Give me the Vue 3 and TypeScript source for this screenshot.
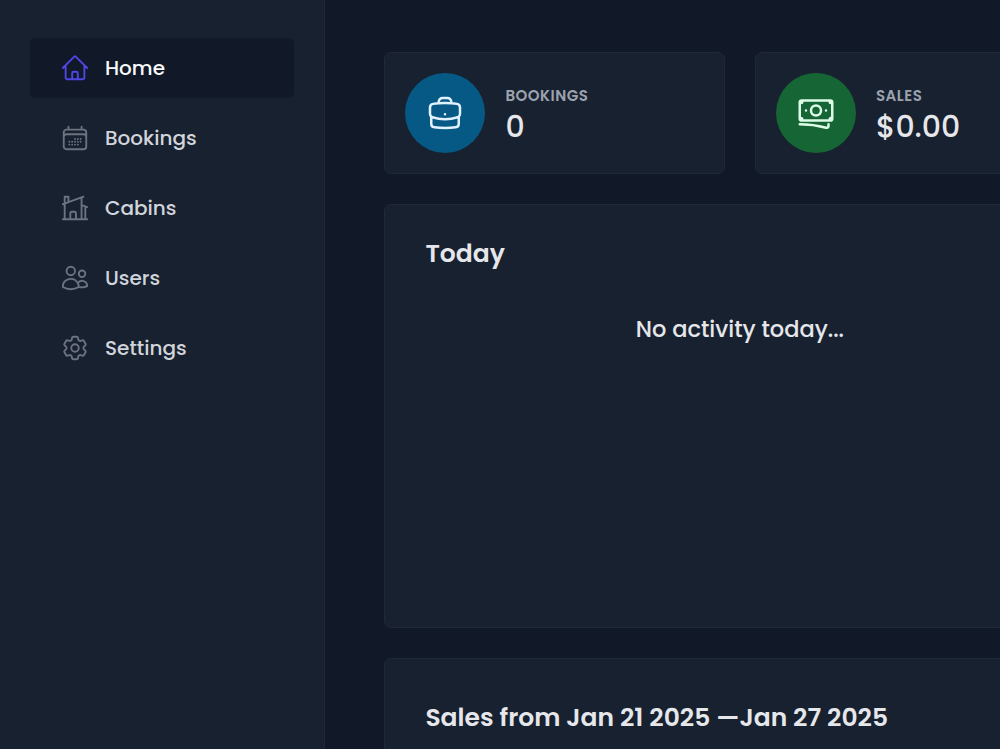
<script setup lang="ts">
interface NavItem {
  label: string
  key: string
  paths: string[]
  active?: boolean
}

interface Stat {
  title: string
  value: string
  tone: string
  path: string
}

const navItems: NavItem[] = [
  {
    label: 'Home',
    key: 'home',
    active: true,
    paths: [
      'M2.25 12l8.954-8.955c.44-.439 1.152-.439 1.591 0L21.75 12M4.5 9.75v10.125c0 .621.504 1.125 1.125 1.125H9.75v-4.875c0-.621.504-1.125 1.125-1.125h2.25c.621 0 1.125.504 1.125 1.125V21h4.125c.621 0 1.125-.504 1.125-1.125V9.75M8.25 21h8.25',
    ],
  },
  {
    label: 'Bookings',
    key: 'bookings',
    paths: [
      'M6.75 3v2.25M17.25 3v2.25M3 18.75V7.5a2.25 2.25 0 012.25-2.25h13.5A2.25 2.25 0 0121 7.5v11.25m-18 0A2.25 2.25 0 005.25 21h13.5A2.25 2.25 0 0021 18.75m-18 0v-7.5A2.25 2.25 0 015.25 9h13.5A2.25 2.25 0 0121 11.25v7.5m-9-6h.008v.008H12v-.008zM12 15h.008v.008H12V15zm0 2.25h.008v.008H12v-.008zM9.75 15h.008v.008H9.75V15zm0 2.25h.008v.008H9.75v-.008zM7.5 15h.008v.008H7.5V15zm0 2.25h.008v.008H7.5v-.008zm6.75-4.5h.008v.008h-.008v-.008zm0 2.25h.008v.008h-.008V15zm0 2.25h.008v.008h-.008v-.008zm2.25-4.5h.008v.008H16.5v-.008zm0 2.25h.008v.008H16.5V15z',
    ],
  },
  {
    label: 'Cabins',
    key: 'cabins',
    paths: [
      'M8.25 21v-4.875c0-.621.504-1.125 1.125-1.125h2.25c.621 0 1.125.504 1.125 1.125V21m0 0h4.5V3.545M12.75 21h7.5V10.75M2.25 21h1.5m18 0h-18M2.25 9l4.5-1.636M18.75 3l-1.5.545m0 6.205l3 1m1.5.5l-1.5-.5M6.75 7.364V3h-3v18m3-13.636l10.5-3.819',
    ],
  },
  {
    label: 'Users',
    key: 'users',
    paths: [
      'M15 19.128a9.38 9.38 0 002.625.372 9.337 9.337 0 004.121-.952 4.125 4.125 0 00-7.533-2.493M15 19.128v-.003c0-1.113-.285-2.16-.786-3.07M15 19.128v.106A12.318 12.318 0 018.624 21c-2.331 0-4.512-.645-6.374-1.766l-.001-.109a6.375 6.375 0 0111.964-3.07M12 6.375a3.375 3.375 0 11-6.75 0 3.375 3.375 0 016.75 0zm8.25 2.25a2.625 2.625 0 11-5.25 0 2.625 2.625 0 015.25 0z',
    ],
  },
  {
    label: 'Settings',
    key: 'settings',
    paths: [
      'M9.594 3.94c.09-.542.56-.94 1.11-.94h2.593c.55 0 1.02.398 1.11.94l.213 1.281c.063.374.313.686.645.87.074.04.147.083.22.127.324.196.72.257 1.075.124l1.217-.456a1.125 1.125 0 011.37.49l1.296 2.247a1.125 1.125 0 01-.26 1.431l-1.003.827c-.293.24-.438.613-.431.992a6.759 6.759 0 010 .255c-.007.378.138.75.43.99l1.005.828c.424.35.534.954.26 1.43l-1.298 2.247a1.125 1.125 0 01-1.369.491l-1.217-.456c-.355-.133-.75-.072-1.076.124a6.57 6.57 0 01-.22.128c-.331.183-.581.495-.644.869l-.213 1.28c-.09.543-.56.941-1.11.941h-2.594c-.55 0-1.02-.398-1.11-.94l-.213-1.281c-.062-.374-.312-.686-.644-.87a6.52 6.52 0 01-.22-.127c-.325-.196-.72-.257-1.076-.124l-1.217.456a1.125 1.125 0 01-1.369-.49l-1.297-2.247a1.125 1.125 0 01.26-1.431l1.004-.827c.292-.24.437-.613.43-.992a6.932 6.932 0 010-.255c.007-.378-.138-.75-.43-.99l-1.004-.828a1.125 1.125 0 01-.26-1.43l1.297-2.247a1.125 1.125 0 011.37-.491l1.216.456c.356.133.751.072 1.076-.124.072-.044.146-.087.22-.128.332-.183.582-.495.644-.869l.214-1.281z',
      'M15 12a3 3 0 11-6 0 3 3 0 016 0z',
    ],
  },
]

const stats: Stat[] = [
  {
    title: 'Bookings',
    value: '0',
    tone: 'blue',
    path: 'M20.25 14.15v4.25c0 1.094-.787 2.036-1.872 2.18-2.087.277-4.216.42-6.378.42s-4.291-.143-6.378-.42c-1.085-.144-1.872-1.086-1.872-2.18v-4.25m16.5 0a2.18 2.18 0 00.75-1.661V8.706c0-1.081-.768-2.015-1.837-2.175a48.114 48.114 0 00-3.413-.387m4.5 8.006c-.194.165-.42.295-.673.38A23.978 23.978 0 0112 15.75c-2.648 0-5.195-.429-7.577-1.22a2.016 2.016 0 01-.673-.38m0 0A2.18 2.18 0 013 12.489V8.706c0-1.081.768-2.015 1.837-2.175a48.111 48.111 0 013.413-.387m7.5 0V5.25A2.25 2.25 0 0013.5 3h-3a2.25 2.25 0 00-2.25 2.25v.894m7.5 0a48.667 48.667 0 00-7.5 0M12 12.75h.008v.008H12v-.008z',
  },
  {
    title: 'Sales',
    value: '$0.00',
    tone: 'green',
    path: 'M2.25 18.75a60.07 60.07 0 0115.797 2.101c.727.198 1.453-.342 1.453-1.096V18.75M3.75 4.5v.75A.75.75 0 013 6h-.75m0 0v-.375c0-.621.504-1.125 1.125-1.125H20.25M2.25 6v9m18-10.5v.75c0 .414.336.75.75.75h.75m-1.5-1.5h.375c.621 0 1.125.504 1.125 1.125v9.75c0 .621-.504 1.125-1.125 1.125h-.375m1.5-1.5H21a.75.75 0 00-.75.75v.75m0 0H3.75m0 0h-.375a1.125 1.125 0 01-1.125-1.125V15m1.5 1.5v-.75A.75.75 0 003 15h-.75M15 10.5a3 3 0 11-6 0 3 3 0 016 0zm3 0h.008v.008H18V10.5zm-12 0h.008v.008H6V10.5z',
  },
]
</script>

<template>
  <div class="layout">
    <aside class="sidebar">
      <nav class="nav">
        <a v-for="item in navItems" :key="item.key" class="nav-item" :class="{ active: item.active }">
          <svg class="icon" viewBox="0 0 24 24">
            <path v-for="d in item.paths" :key="d" :d="d" />
          </svg>
          <span>{{ item.label }}</span>
        </a>
      </nav>
    </aside>

    <main class="main">
      <div class="dashboard">
        <section v-for="stat in stats" :key="stat.title" class="card stat">
          <div class="badge" :class="stat.tone">
            <svg class="icon" viewBox="0 0 24 24"><path :d="stat.path" /></svg>
          </div>
          <div>
            <h5 class="stat-title">{{ stat.title }}</h5>
            <p class="stat-value">{{ stat.value }}</p>
          </div>
        </section>

        <section class="card panel today">
          <h2>Today</h2>
          <p class="empty">No activity today...</p>
        </section>

        <section class="card panel sales">
          <h2>Sales from Jan 21 2025 —Jan 27 2025</h2>
        </section>
      </div>
    </main>
  </div>
</template>

<style>
html,
body {
  margin: 0;
  overflow: hidden;
  background: #111827;
}
</style>

<style scoped>
.layout {
  display: grid;
  grid-template-columns: 325px 1fr;
  width: 100vw;
  height: 100vh;
  overflow: hidden;
  box-sizing: border-box;
  font-family: Poppins, Inter, sans-serif;
  color: #e5e7eb;
}

h2,
h5,
p {
  margin: 0;
}

.icon {
  flex: none;
  fill: none;
  stroke: currentColor;
  stroke-width: 1.5;
  stroke-linecap: round;
  stroke-linejoin: round;
}

.sidebar {
  box-sizing: border-box;
  padding: 38px 30px 0 30px;
  background: #18212f;
  border-right: 1px solid #1f2937;
}

.nav {
  display: flex;
  flex-direction: column;
  gap: 10px;
}

.nav-item {
  display: flex;
  align-items: center;
  gap: 15px;
  height: 60px;
  box-sizing: border-box;
  padding: 0 30px;
  border-radius: 6px;
  color: #d1d5db;
  font-size: 20px;
  font-weight: 500;
  line-height: 30px;
}

.nav-item .icon {
  width: 30px;
  height: 30px;
  color: #6b7280;
}

.nav-item.active {
  background: #111827;
  color: #f9fafb;
}

.nav-item.active .icon {
  color: #4f46e5;
}

.main {
  min-width: 0;
  overflow: hidden;
  padding: 52px 0 0 59.4px;
  background: #111827;
}

.dashboard {
  display: grid;
  grid-template-columns: repeat(4, 340.5px);
  grid-template-rows: 122px 424px 530px;
  gap: 30px;
}

.card {
  box-sizing: border-box;
  background: #18212f;
  border: 1px solid #1f2937;
  border-radius: 7px;
}

.stat {
  display: flex;
  align-items: center;
  gap: 20px;
  padding: 20px;
}

.badge {
  display: flex;
  align-items: center;
  justify-content: center;
  width: 80px;
  height: 80px;
  border-radius: 50%;
}

.badge .icon {
  width: 40px;
  height: 40px;
}

.badge.blue {
  background: #075985;
  color: #e0f2fe;
}

.badge.green {
  background: #166534;
  color: #dcfce7;
}

.stat-title {
  font-size: 15px;
  font-weight: 600;
  line-height: 22px;
  letter-spacing: 0.5px;
  text-transform: uppercase;
  color: #9ca3af;
}

.stat-value {
  font-size: 30px;
  font-weight: 500;
  line-height: 30px;
  padding-top: 5px;
}

.panel {
  grid-column: span 2;
  padding: 30px 40px;
}

.panel h2 {
  font-size: 25px;
  font-weight: 600;
  line-height: 37px;
}

.today {
  grid-column: 1 / span 2;
}

.sales {
  grid-column: 1 / -1;
  padding-top: 40px;
}

.empty {
  margin-top: 40px;
  font-size: 22.5px;
  font-weight: 500;
  line-height: 34px;
  text-align: center;
}
</style>
